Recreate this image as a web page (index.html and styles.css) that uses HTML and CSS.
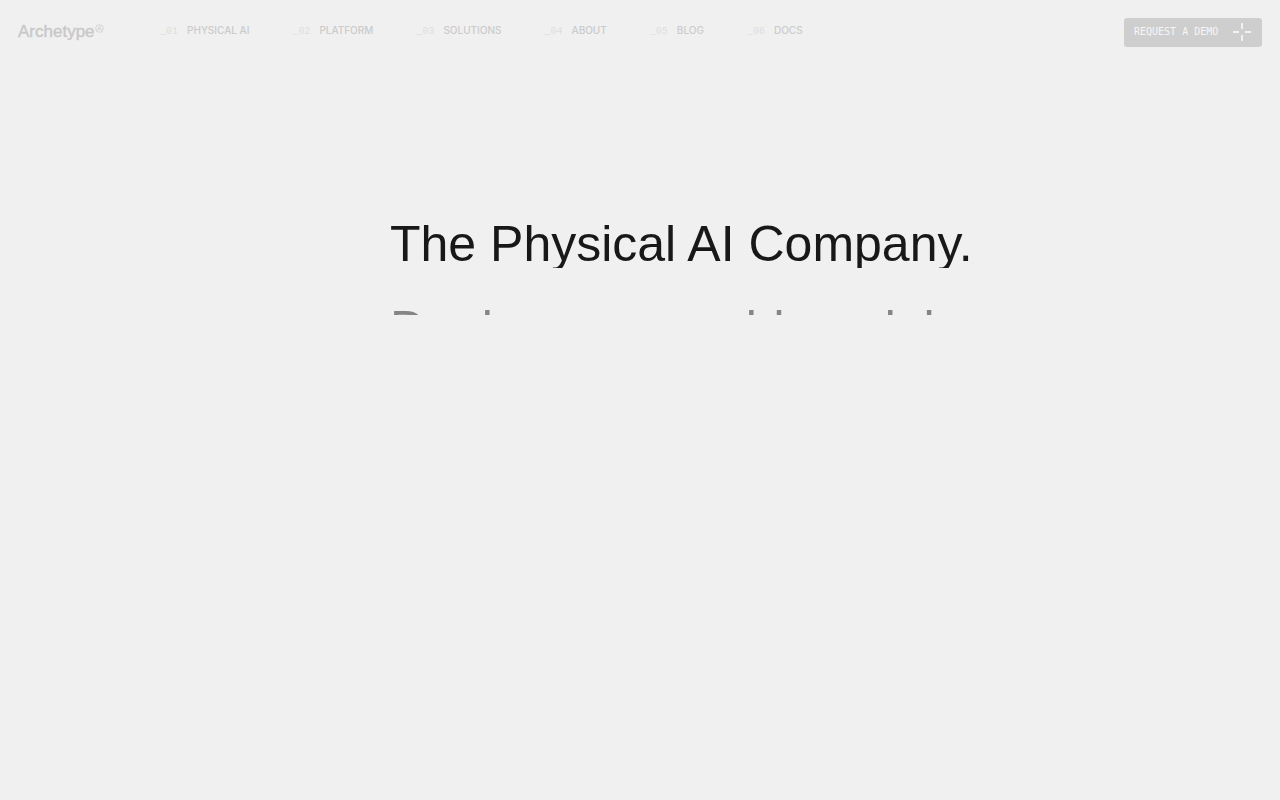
FILE: index.html
```html
<!DOCTYPE html>
<html lang="en">
<head>
<meta charset="utf-8">
<meta name="viewport" content="width=device-width, initial-scale=1">
<title>Archetype</title>
<link rel="stylesheet" href="styles.css">
</head>
<body>
<header class="header">
  <a class="logo" href="#">Archetype<svg class="mark" viewBox="0 0 9 9" aria-hidden="true"><circle cx="4.5" cy="4.5" r="3.8"/><path d="M2.8 6.4L4.5 2.3L6.2 6.4M3.4 5.1H5.6"/></svg></a>
  <nav class="nav">
    <a class="item" href="#"><span class="num">_01</span>PHYSICAL AI</a>
    <a class="item" href="#"><span class="num">_02</span>PLATFORM</a>
    <a class="item" href="#"><span class="num">_03</span>SOLUTIONS</a>
    <a class="item" href="#"><span class="num">_04</span>ABOUT</a>
    <a class="item" href="#"><span class="num">_05</span>BLOG</a>
    <a class="item" href="#"><span class="num">_06</span>DOCS</a>
  </nav>
  <button class="demo" type="button">REQUEST A DEMO<svg class="cross" viewBox="0 0 18 18" aria-hidden="true"><path d="M9 0V6M9 12V18M0 9H6M12 9H18"/></svg></button>
</header>
<main class="hero">
  <h1 class="title">The Physical AI Company.</h1>
  <p class="reveal">Deploy new world model</p>
</main>
</body>
</html>
```
FILE: styles.css
```css
* { box-sizing: border-box; }
body {
  margin: 0;
  background: #f0f0f0;
  color: #181818;
  font-family: "Liberation Sans", Arial, sans-serif;
}
.header {
  display: flex;
  align-items: center;
  height: 64px;
  padding: 0 18px;
}
.logo {
  display: flex;
  width: 142px;
  color: #c8c8c8;
  font-size: 17px;
  font-weight: 400;
  line-height: 20px;
  -webkit-text-stroke: 0.4px #c8c8c8;
  text-decoration: none;
}
.mark {
  width: 9px;
  height: 9px;
  margin-top: 2px;
  fill: none;
  stroke: #cdcdcd;
  stroke-width: 0.8;
}
.nav {
  display: flex;
  gap: 43px;
  padding-bottom: 3px;
}
.item {
  display: flex;
  align-items: baseline;
  gap: 9px;
  color: #cbcbcb;
  font: 500 10px/14px Inter, sans-serif;
  text-decoration: none;
}
.num {
  color: #dedede;
  font: 10px/14px "Liberation Mono", monospace;
}
.demo {
  display: flex;
  align-items: center;
  justify-content: space-between;
  width: 138px;
  height: 29px;
  margin-left: auto;
  padding: 0 11px 0 10px;
  border: 0;
  border-radius: 3px;
  background: #cecece;
  color: #f6f6f6;
  font: 10px/14px "DejaVu Sans Mono", monospace;
}
.cross {
  width: 18px;
  height: 18px;
  fill: none;
  stroke: #f2f2ee;
  stroke-width: 2;
}
.hero {
  padding: 152px 0 0 390px;
}
.title {
  height: 52px;
  margin: 0;
  overflow: hidden;
  font-size: 50px;
  font-weight: 400;
  line-height: 56px;
  white-space: nowrap;
}
.reveal {
  height: 12px;
  margin: 35px 0 0;
  overflow: hidden;
  color: #858585;
  font-size: 50px;
  line-height: 52px;
  white-space: nowrap;
}
```
